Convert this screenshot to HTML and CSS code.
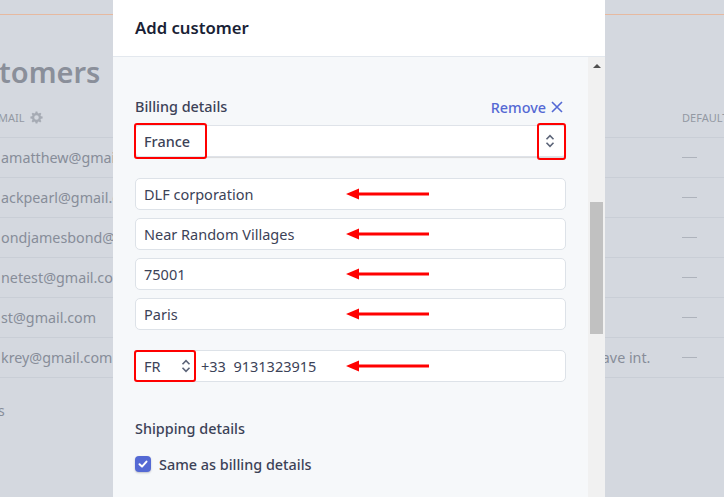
FILE: index.html
```html
<!DOCTYPE html>
<html lang="en">
<head>
	<meta charset="UTF-8">
	<title>Add customer</title>
	<link rel="stylesheet" href="styles.css">
</head>
<body>
	<!-- dimmed customers list behind the modal -->
	<div class="page">
		<div class="topbar"></div>
		<h1 class="title">tomers</h1>
		<div class="table">
			<div class="row head">
				<span class="cell email">MAIL
					<svg class="gear" viewBox="0 0 16 16" width="13" height="13"><path d="M8 5.2a2.8 2.8 0 1 0 0 5.6a2.8 2.8 0 1 0 0-5.6zM6.9 0.5h2.2l.4 2 1.3.6 1.7-1.1 1.5 1.5-1.1 1.7.6 1.3 2 .4v2.2l-2 .4-.6 1.3 1.1 1.7-1.5 1.5-1.7-1.1-1.3.6-.4 2H6.9l-.4-2-1.3-.6-1.7 1.1-1.5-1.5 1.1-1.7-.6-1.3-2-.4V6.9l2-.4.6-1.3-1.1-1.7 1.5-1.5 1.7 1.1 1.3-.6z" fill-rule="evenodd"/></svg>
				</span>
				<span class="cell"></span>
				<span class="cell">DEFAULT</span>
			</div>
			<div class="row"><span class="cell email">amatthew@gmail.com</span><span class="cell"></span><span class="cell"><i class="dash"></i></span></div>
			<div class="row"><span class="cell email">ackpearl@gmail.com</span><span class="cell"></span><span class="cell"><i class="dash"></i></span></div>
			<div class="row"><span class="cell email">ondjamesbond@gmail.com</span><span class="cell"></span><span class="cell"><i class="dash"></i></span></div>
			<div class="row"><span class="cell email">netest@gmail.com</span><span class="cell"></span><span class="cell"><i class="dash"></i></span></div>
			<div class="row"><span class="cell email">st@gmail.com</span><span class="cell"></span><span class="cell"><i class="dash"></i></span></div>
			<div class="row"><span class="cell email">krey@gmail.com</span><span class="cell desc">Save int.</span><span class="cell"><i class="dash"></i></span></div>
		</div>
		<div class="count">s</div>
	</div>

	<div class="modal">
		<div class="modal-head">Add customer</div>
		<div class="modal-body">
			<div class="content">
				<div class="section-row">
					<span class="label">Billing details</span>
					<a class="remove">Remove
						<svg viewBox="0 0 12 12" width="12" height="12"><path d="M1 1L11 11M11 1L1 11" stroke="currentColor" stroke-width="1.6" fill="none"/></svg>
					</a>
				</div>
				<div class="select">
					<span class="select-text">France</span>
					<svg class="chev" viewBox="0 0 10 14" width="10" height="14"><path d="M1.5 5.2L5 1.7L8.5 5.2M1.5 8.8L5 12.3L8.5 8.8" stroke="currentColor" stroke-width="1.6" fill="none"/></svg>
					<div class="mark mark-country"></div>
					<div class="mark mark-chev"></div>
				</div>

				<div class="fields">
					<div class="field"><span>DLF corporation</span>
						<svg class="arrow" viewBox="0 0 83 12" width="83" height="12"><path d="M0 6L13 0.5V11.5Z M12 4.5H83V7.5H12Z" fill="#f00"/></svg>
					</div>
					<div class="field"><span>Near Random Villages</span>
						<svg class="arrow" viewBox="0 0 83 12" width="83" height="12"><path d="M0 6L13 0.5V11.5Z M12 4.5H83V7.5H12Z" fill="#f00"/></svg>
					</div>
					<div class="field"><span>75001</span>
						<svg class="arrow" viewBox="0 0 83 12" width="83" height="12"><path d="M0 6L13 0.5V11.5Z M12 4.5H83V7.5H12Z" fill="#f00"/></svg>
					</div>
					<div class="field"><span>Paris</span>
						<svg class="arrow" viewBox="0 0 83 12" width="83" height="12"><path d="M0 6L13 0.5V11.5Z M12 4.5H83V7.5H12Z" fill="#f00"/></svg>
					</div>
				</div>

				<div class="field phone">
					<span class="code">FR</span>
					<svg class="chev small" viewBox="0 0 10 14" width="10" height="14"><path d="M1.5 5.2L5 1.7L8.5 5.2M1.5 8.8L5 12.3L8.5 8.8" stroke="currentColor" stroke-width="1.6" fill="none"/></svg>
					<span class="number">+33&nbsp; 9131323915</span>
					<div class="mark mark-fr"></div>
					<svg class="arrow" viewBox="0 0 83 12" width="83" height="12"><path d="M0 6L13 0.5V11.5Z M12 4.5H83V7.5H12Z" fill="#f00"/></svg>
				</div>

				<div class="label shipping">Shipping details</div>
				<label class="check-row">
					<span class="checkbox">
						<svg viewBox="0 0 16 16" width="16" height="16"><path d="M4.5 8.3L7 10.6L11.5 5.6" stroke="#fff" stroke-width="2" fill="none" stroke-linecap="round" stroke-linejoin="round"/></svg>
					</span>
					Same as billing details
				</label>
			</div>
			<div class="scrollbar">
				<div class="scroll-up"></div>
				<div class="thumb"></div>
			</div>
		</div>
	</div>
</body>
</html>
```
FILE: styles.css
```css
* {
	box-sizing: border-box;
}
body {
	margin: 0;
	width: 724px;
	height: 497px;
	overflow: hidden;
	position: relative;
	background: #d4d8df;
	font-family: "Noto Sans", "Open Sans", sans-serif;
	color: #3c4257;
}

/*背景页面*/
.page {
	height: 497px;
	color: #878d99;
}
.topbar {
	height: 15px;
	border-bottom: 1px solid #e6b9a0;
}
.title {
	margin: 39px 0 0 -1px;
	font-size: 29px;
	line-height: 36px;
	font-weight: 600;
	color: #8a8f9a;
}
.table {
	margin-top: 7px;
}
.row {
	display: grid;
	grid-template-columns: 113px 481px 88px 1fr;
	height: 40px;
	align-items: center;
	border-bottom: 1px solid #c9ced6;
	font-size: 14.3px;
	white-space: nowrap;
	overflow: hidden;
}
.row.head {
	height: 41px;
	font-size: 11px;
	color: #9399a3;
}
.cell {
	overflow: hidden;
}
.desc {
	grid-column: 3;
}
.row .cell:last-child {
	grid-column: 4;
}
.email {
	padding-left: 1px;
}
.head .email {
	display: flex;
	align-items: center;
	gap: 5px;
	margin-left: -3px;
}
.gear {
	fill: #a6abb4;
}
.dash {
	display: block;
	width: 15px;
	height: 1px;
	background: #aeb3bc;
}
.count {
	margin-top: 23px;
	font-size: 14px;
	line-height: 20px;
	margin-left: -2px;
}

/*弹窗*/
.modal {
	position: absolute;
	top: 0;
	left: 113px;
	width: 492px;
	height: 520px;
	background: #f6f8fa;
	display: flex;
	flex-direction: column;
}
.modal-head {
	height: 57px;
	flex: none;
	padding-left: 22px;
	background: #fff;
	border-bottom: 1px solid #e3e8ee;
	font-size: 16.7px;
	font-weight: 600;
	line-height: 56px;
	color: #1a1f36;
}
.modal-body {
	flex: 1;
	display: flex;
}
.content {
	flex: 1;
	padding: 40px 22px 0;
}
.scrollbar {
	width: 17px;
	flex: none;
	background: #f1f1f1;
}
.scroll-up {
	width: 0;
	height: 0;
	margin: 7px auto 0;
	border-left: 4px solid transparent;
	border-right: 4px solid transparent;
	border-bottom: 4px solid #505050;
}
.thumb {
	margin: 134px 2px 0;
	height: 132px;
	background: #c1c1c1;
}

.label {
	font-size: 14.4px;
	font-weight: 500;
	line-height: 20px;
	color: #3c4257;
}
.section-row {
	display: flex;
	justify-content: space-between;
	align-items: center;
	height: 20px;
}
.remove {
	display: flex;
	align-items: center;
	gap: 5px;
	font-size: 14.4px;
	font-weight: 500;
	color: #5469d4;
	margin-right: 3px;
}
.select {
	position: relative;
	margin-top: 8px;
	height: 32px;
	display: flex;
	align-items: center;
	justify-content: space-between;
	padding: 0 10px 0 8px;
	background: #fff;
	border: 1px solid #dfe3e9;
	border-radius: 4px;
	box-shadow: 0 1px 1px rgba(0, 0, 0, 0.12);
	font-size: 14.4px;
	font-weight: 500;
}
.chev {
	color: #5c6478;
}
.fields {
	margin-top: 21px;
	display: flex;
	flex-direction: column;
	gap: 8px;
}
.field {
	position: relative;
	height: 32px;
	display: flex;
	align-items: center;
	padding-left: 8px;
	background: #fff;
	border: 1px solid #dde2e8;
	border-radius: 5px;
	font-size: 14.5px;
	color: #3c4257;
}
.phone {
	margin-top: 20px;
}
.code {
	width: 37px;
}
.number {
	margin-left: 10px;
}

/*红色标注*/
.mark {
	position: absolute;
	border: 2px solid #f00;
	border-radius: 3px;
}
.mark-country {
	left: -2px;
	top: -3px;
	width: 73px;
	height: 36px;
}
.mark-chev {
	right: -1px;
	top: -3px;
	width: 29px;
	height: 37px;
}
.mark-fr {
	left: -2px;
	top: -1px;
	width: 62px;
	height: 32px;
}
.arrow {
	position: absolute;
	left: 210px;
	top: 9px;
}

.shipping {
	margin-top: 37px;
}
.check-row {
	display: flex;
	align-items: center;
	gap: 8px;
	margin-top: 15px;
	height: 20px;
	font-size: 14.4px;
	font-weight: 500;
}
.checkbox {
	width: 16px;
	height: 16px;
	border-radius: 4px;
	background: #5469d4;
	box-shadow: 0 1px 2px rgba(60, 66, 87, 0.3);
}
.checkbox svg {
	display: block;
}
```
